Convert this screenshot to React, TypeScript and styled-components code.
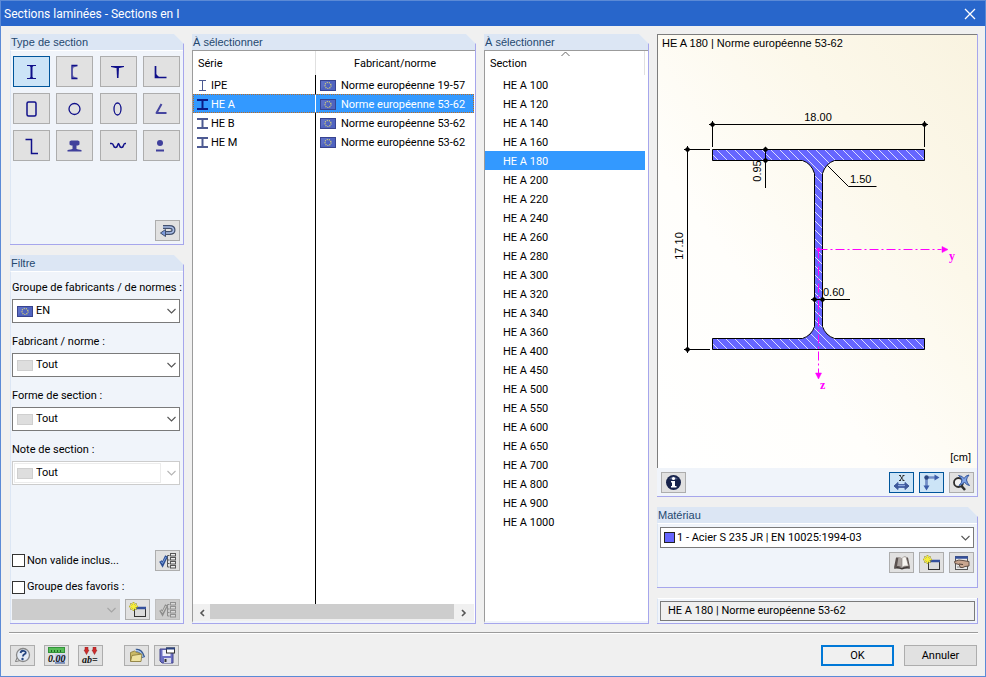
import React, { useState } from 'react';
import styled, { createGlobalStyle, css } from 'styled-components';

const NAVY = '#10108a';
const UI_FONT = 'Roboto, "Liberation Sans", sans-serif';
const CAPTION_FONT = '"Liberation Sans", Arial, sans-serif';

const GlobalStyle = createGlobalStyle`
  *, *::before, *::after { box-sizing: border-box; }
  body { margin: 0; background: #f0f0f0; }
  button, select, input, table { font: inherit; color: inherit; }
  button { padding: 0; }
`;

/* ---------- window frame ---------- */

const Dialog = styled.div`
  display: flex;
  flex-direction: column;
  min-height: 100vh;
  border: 1px solid #5b8ad6;
  background: #f0f0f0;
  color: #000;
  font: 11px/16px ${UI_FONT};
`;

const TitleBar = styled.header`
  display: flex;
  align-items: center;
  justify-content: space-between;
  height: 25px;
  padding: 0 7px 0 3px;
  background: #2866cb;
  color: #fff;
`;

const Title = styled.h1`
  margin: 0;
  font: 400 12px/16px ${UI_FONT};
`;

const CloseButton = styled.button`
  display: grid;
  place-items: center;
  width: 16px;
  height: 16px;
  border: 0;
  background: none;
`;

const Columns = styled.main`
  flex: 1;
  display: grid;
  grid-template-columns: 174px minmax(0, 284fr) minmax(0, 165fr) minmax(0, 321fr);
  gap: 8px;
  padding: 8px 7px 8px 9px;
`;

const Column = styled.div`
  display: flex;
  flex-direction: column;
  gap: 10px;
  min-width: 0;
`;

/* ---------- panels ---------- */

const Panel = styled.section<{ $grow?: boolean; $minHeight?: number; $corner?: boolean }>`
  display: flex;
  flex-direction: column;
  flex: ${p => (p.$grow ? '1 1 auto' : '0 0 auto')};
  min-height: ${p => (p.$minHeight ? `${p.$minHeight}px` : '0')};
  border: solid #a6a6ec;
  border-width: 0 1px 1px 0;
  background: #f0f4fa;
  ${p => p.$corner && css`
    clip-path: polygon(0 0, calc(100% - 10px) 0, 100% 10px, 100% 100%, 0 100%);
  `}
`;

const PanelTitle = styled.h2`
  margin: 0;
  height: 16px;
  padding-left: 1px;
  background: #dce6f4;
  color: #24486f;
  font: 400 11px/16px ${CAPTION_FONT};
`;

const PanelBody = styled.div<{ $pad: string }>`
  flex: 1;
  display: flex;
  flex-direction: column;
  border-top: 1px solid #fff;
  border-left: 1px solid #dce6f4;
  padding: ${p => p.$pad};
`;

const ListBody = styled.div<{ $right: number }>`
  flex: 1;
  display: flex;
  flex-direction: column;
  border-top: 1px solid #9b9b9b;
  border-left: 1px solid #9b9b9b;
  border-bottom: 2px solid #f0f4fa;
  padding-right: ${p => p.$right}px;
  background: #fff;
`;

/* ---------- buttons ---------- */

const ToolButton = styled.button<{ $on?: boolean; $large?: boolean }>`
  display: grid;
  place-items: center;
  width: ${p => (p.$large ? 37 : 25)}px;
  height: ${p => (p.$large ? 31 : 21)}px;
  border: 1px solid ${p => (p.$on ? '#00559b' : '#adadad')};
  background: ${p => (p.$on ? '#cce4f7' : '#e1e1e1')};
  &:disabled { background: #ccc; border-color: #bfbfbf; }
`;

const ShapeGrid = styled.div`
  display: grid;
  grid-template-columns: repeat(4, 37px);
  justify-content: space-between;
  row-gap: 6px;
`;

const ButtonRow = styled.div<{ $between?: boolean }>`
  display: flex;
  align-items: center;
  justify-content: ${p => (p.$between ? 'space-between' : 'flex-end')};
  gap: 5px;
`;

const Push = styled.div`
  flex: 1;
`;

const DialogButton = styled.button<{ $primary?: boolean }>`
  width: 73px;
  height: 21px;
  border: ${p => (p.$primary ? '2px solid #0078d7' : '1px solid #adadad')};
  background: ${p => (p.$primary ? '#f0f0f0' : '#e1e1e1')};
  font-size: 11px;
`;

/* ---------- fields ---------- */

const Field = styled.label`
  display: flex;
  flex-direction: column;
  gap: 3px;
  margin-bottom: 11px;
  white-space: nowrap;
`;

const ComboBox = styled.span<{ $height: number; $grow?: boolean }>`
  display: grid;
  align-items: center;
  height: ${p => p.$height}px;
  ${p => p.$grow && 'flex: 1;'}
  > * { grid-area: 1 / 1; }
`;

const Select = styled.select<{ $indent: number; $blank?: boolean }>`
  appearance: none;
  width: 100%;
  height: 100%;
  padding: 0 20px 0 ${p => p.$indent}px;
  border: 1px solid #7a7a7a;
  border-radius: 0;
  background: #fff;
  &:disabled {
    opacity: 1;
    color: #000;
    border-color: #ccc;
    background: ${p => (p.$blank ? '#ccc' : '#fff')};
  }
`;

const InnerFrame = styled.span`
  height: 20px;
  margin: 0 19px 0 2px;
  border: 1px solid #ececec;
  pointer-events: none;
`;

const LeadSlot = styled.span<{ $left?: number }>`
  display: flex;
  justify-self: start;
  margin-left: ${p => p.$left ?? 5}px;
  pointer-events: none;
`;

const ChevronSlot = styled.span`
  display: flex;
  justify-self: end;
  margin-right: 4px;
  pointer-events: none;
`;

const Swatch = styled.span<{ $material?: boolean }>`
  width: ${p => (p.$material ? 11 : 16)}px;
  height: 11px;
  border: 1px solid ${p => (p.$material ? '#222' : '#cfcfcf')};
  background: ${p => (p.$material ? '#6666ff' : '#dedede')};
`;

const CheckLabel = styled.label`
  display: flex;
  align-items: center;
  gap: 2px;
`;

const CheckInput = styled.input`
  appearance: none;
  width: 13px;
  height: 13px;
  margin: 0;
  border: 1px solid #333;
  background: #fff;
  &:checked { background: #333; box-shadow: inset 0 0 0 2px #fff; }
`;

const FavoriteRow = styled.div`
  display: flex;
  height: 28px;
  padding-top: 4px;
`;

const MaterialTools = styled.div`
  padding-top: 4px;
`;

/* ---------- tables ---------- */

const Table = styled.table`
  width: 100%;
  border-collapse: separate;
  border-spacing: 0;
  table-layout: fixed;
`;

const HeadCell = styled.th<{ $align?: string; $width?: string; $rule?: boolean }>`
  height: 24px;
  width: ${p => p.$width ?? 'auto'};
  padding: 2px 5px 0;
  border-right: ${p => (p.$rule ? '1px solid #e0e0e0' : '0')};
  text-align: ${p => p.$align ?? 'left'};
  font-weight: 400;
`;

const Row = styled.tr<{ $selected?: boolean; $dotted?: boolean }>`
  height: 19px;
  cursor: default;
  ${p => p.$selected && css`
    background: #3399ff;
    color: #fff;
  `}
  ${p => p.$selected && p.$dotted && css`
    outline: 1px dotted #c06a1c;
    outline-offset: -1px;
  `}
`;

const Cell = styled.td<{ $pad: number; $line?: string }>`
  padding: 2px 0 0 ${p => p.$pad}px;
  border-right: ${p => (p.$line ? `1px solid ${p.$line}` : '0')};
  white-space: nowrap;
`;

const CellContent = styled.span<{ $gap: number }>`
  display: flex;
  align-items: center;
  gap: ${p => p.$gap}px;
  height: 17px;
`;

const ColumnRule = styled.div`
  flex: 1;
  width: 123px;
  border-right: 1px solid #000;
`;

const SortMark = styled.div`
  display: flex;
  justify-content: center;
  height: 0;
`;

const ScrollBar = styled.div`
  display: flex;
  height: 17px;
  background: #f0f0f0;
`;

const ScrollArrow = styled.button<{ $wide?: boolean }>`
  display: grid;
  place-items: center;
  width: ${p => (p.$wide ? 20 : 17)}px;
  border: 0;
  background: #f0f0f0;
`;

const ScrollThumb = styled.div`
  flex: 1;
  margin-bottom: 2px;
  background: #cdcdcd;
`;

/* ---------- preview ---------- */

const Canvas = styled.figure`
  flex: 1;
  display: flex;
  flex-direction: column;
  margin: 0;
  padding: 0 4px 3px;
  border: solid #7d7d7d;
  border-width: 1px 0 0 1px;
  background: linear-gradient(to top right, #fff 0%, #fffefb 35%, #fcf8ea 70%, #f9f3e0 100%);
  font: 11px/16px ${CAPTION_FONT};
`;

const Drawing = styled.svg`
  margin: auto;
  flex: none;
  overflow: visible;
`;

const Unit = styled.figcaption`
  align-self: flex-end;
  padding-right: 2px;
`;

const PreviewTools = styled.div`
  padding: 4px 3px 3px 4px;
`;

const StatusBox = styled.output`
  display: block;
  height: 20px;
  padding-left: 7px;
  border: 1px solid #7a7a7a;
  background: #f0f0f0;
  line-height: 18px;
`;

/* ---------- footer ---------- */

const Footer = styled.footer`
  display: flex;
  align-items: center;
  gap: 10px;
  margin: 0 7px 0 8px;
  padding: 12px 1px 10px;
  border-top: 1px solid #9b9b9b;
  box-shadow: inset 0 1px 0 #fff;
`;

const ToolGroup = styled.div<{ $gap: number; $after: number }>`
  display: flex;
  gap: ${p => p.$gap}px;
  margin-right: ${p => p.$after}px;
`;

/* ---------- icons ---------- */

const Icon = ({ w = 20, h = 20, children }: { w?: number; h?: number; children: React.ReactNode }) => (
  <svg width={w} height={h} viewBox={`0 0 ${w} ${h}`} fill="none" aria-hidden="true">{children}</svg>
);

const Chevron = ({ color = '#555' }: { color?: string }) => (
  <Icon w={9} h={6}><path d="M.5 1l4 4 4-4" stroke={color} strokeWidth="1.1" /></Icon>
);

const Flag = () => (
  <Icon w={16} h={11}>
    <rect width="16" height="11" fill="#38448f" />
    <rect x="1" y="1" width="14" height="9" fill="#4f63c0" />
    <path d="M1 1h8L1 9z" fill="#6a7ccc" opacity=".5" />
    <circle cx="8" cy="5.5" r="3" stroke="#e6de6c" strokeWidth="1.2" strokeDasharray="1 1.09" />
  </Icon>
);

const Beam = ({ wide, dark }: { wide?: boolean; dark?: boolean }) => (
  <Icon w={11} h={11}>
    <path
      d={wide ? 'M0 1h11M0 10h11M5.5 1v9' : 'M2 .5h7M2 10.5h7M5.5 .5v10'}
      stroke={dark ? '#0a1a86' : '#4d5a92'}
      strokeWidth={wide ? 2 : 1}
    />
  </Icon>
);

const shapes: { name: string; art: React.ReactNode }[] = [
  { name: 'Sections en I', art: <><path d="M5 3.5h9M5 16.5h9" stroke={NAVY} /><path d="M9.5 4v12" stroke={NAVY} strokeWidth="2" /><path d="M7.5 4h4l-2 1.5zM7.5 16h4l-2-1.5z" fill={NAVY} /></> },
  { name: 'Sections en U', art: <><path d="M12.5 3.5H7v13h5.5" stroke={NAVY} strokeWidth="1.3" /><path d="M7.5 4h5l-4 1.5L8 7zM7.5 16h5l-4-1.5L8 13z" fill={NAVY} opacity=".6" /></> },
  { name: 'Sections en T', art: <><path d="M3 4h13v1l-4.5 1h-4L3 5z" fill={NAVY} /><path d="M8.5 5h2.5l-.5 11h-1.500z" fill={NAVY} /></> },
  { name: 'Cornières', art: <><path d="M4.5 4v11.5h11" stroke={NAVY} strokeWidth="1.7" /><path d="M5 12l3 3H5z" fill={NAVY} /></> },
  { name: 'Sections creuses rectangulaires', art: <rect x="5" y="3" width="9" height="14" rx="1.5" stroke={NAVY} strokeWidth="1.5" /> },
  { name: 'Sections creuses circulaires', art: <circle cx="9.5" cy="10" r="5.5" stroke={NAVY} strokeWidth="1.3" /> },
  { name: 'Sections elliptiques', art: <ellipse cx="9.5" cy="10" rx="3.5" ry="6" stroke={NAVY} strokeWidth="1.3" /> },
  { name: 'Cornières ouvertes', art: <path d="M10.5 5L5.5 14h10" stroke="#4646a0" strokeWidth="2" strokeLinejoin="round" /> },
  { name: 'Sections en Z', art: <path d="M3.5 3.5h6v14h6.5" stroke={NAVY} strokeWidth="1.5" /> },
  { name: 'Rails', art: <path d="M4.5 5.5L6 4.5h7l1.5 1v3L13 9.5h-1.500V13l2 .5 3 .5v1.500h-14V14l3-.5 2-.5V9.500H6L4.500 8.500z" fill="#40409c" /> },
  { name: 'Tôles ondulées', art: <path d="M2 7.500h1.500q1.500 0 2 2t2 2 2-2 1-2 1 2 2 2 2-2 1.500-2H18" stroke={NAVY} strokeWidth="1.5" /> },
  { name: 'Barres pleines', art: <><circle cx="9" cy="7" r="3" fill="#40409c" /><path d="M5 14.5h8" stroke="#40409c" strokeWidth="2.2" /></> },
];

const BackIcon = () => (
  <Icon w={16} h={14}>
    <path d="M3 3h6.500q4 0 4 3t-4 3H5" stroke="#42506e" strokeWidth="4" />
    <path d="M3 3h6.500q4 0 4 3t-4 3H4" stroke="#a9bde6" strokeWidth="1.6" />
    <path d="M5.500 5.500v7L.5 9z" fill="#7d9bdc" stroke="#42506e" />
  </Icon>
);

const TreeCheckIcon = ({ muted }: { muted?: boolean }) => (
  <Icon w={18} h={16}>
    <path d="M8.500 8V2.500h2M8.500 7h2M8.500 10.500h2M8.500 7v7h2" stroke={muted ? '#8d8d8d' : '#555'} />
    {[0, 4, 8, 12].map(y => (
      <rect key={y} x="11.5" y={y + .5} width="5" height="2.5" fill={muted ? '#d8d8d8' : '#eee'} stroke={muted ? '#909090' : '#555'} />
    ))}
    <path d="M1.500 8l2 3.500L7.500 3" stroke={muted ? '#8d8d8d' : '#2e4f93'} strokeWidth="3" />
    <path d="M2 8.500l1.500 2L7 4" stroke={muted ? '#d3d3cf' : '#7fa4e2'} />
  </Icon>
);

const NewIcon = () => (
  <Icon w={18} h={16}>
    <rect x="5.5" y="5.5" width="11" height="9" fill="#dcdcdc" stroke="#333" />
    <path d="M5 6h12" stroke="#34509c" strokeWidth="2.5" />
    <path d="M4.500 0v9M0 4.500h9M1.500 1.500l6 6M7.500 1.500l-6 6" stroke="#8b8420" strokeWidth="1.6" />
    <path d="M4.500 .5v8M.5 4.500h8M2 2l5 5M7 2L2 7" stroke="#f6ee3a" strokeWidth="1.3" />
  </Icon>
);

const HelpIcon = () => (
  <Icon w={18} h={17}>
    <path d="M3 11L1.500 14.500l5-1z" fill="#fff" stroke="#777" />
    <circle cx="9" cy="8" r="6.5" fill="#e4ebf5" stroke="#888" strokeWidth="1.3" />
    <path d="M6.500 6q.5-2.500 3-2.200 3 .4 2 2.700-2.500 1-2.500 3" stroke="#25457f" strokeWidth="1.8" />
    <circle cx="8.5" cy="12" r="1.2" fill="#25457f" />
  </Icon>
);

const iconText = { fontFamily: '"Liberation Serif", serif', fontStyle: 'italic', fontWeight: 700 } as const;

const UnitsIcon = () => (
  <Icon w={19} h={17}>
    <rect x="1.5" y=".5" width="16" height="5" fill="#58bd58" stroke="#32933a" />
    <path d="M4.500 3v2M7.500 3v2M10.500 3v2M13.500 3v2" stroke="#1d6a25" />
    <rect x="8" y="7" width="10" height="9" fill="#bdcdf0" />
    <text x="1" y="15" fontSize="10" fill="#101010" {...iconText}>0.00</text>
    <path d="M8 16h10" stroke="#33508f" />
  </Icon>
);

const AbIcon = () => (
  <Icon w={19} h={17}>
    <path d="M4 0h3v3h1L5.500 7.500 3 3h1zM12 0h3v3h1l-2.500 4.500L11 3h1z" fill="#cf2a2a" stroke="#8e2626" strokeWidth=".5" />
    <text x="1" y="15.5" fontSize="10" fill="#101010" {...iconText}>ab=</text>
  </Icon>
);

const FolderIcon = () => (
  <Icon w={18} h={16}>
    <path d="M8 2.500q5-1 7.500 7" stroke="#35578f" strokeWidth="3.5" />
    <path d="M8 2.500q5 0 7 6.500" stroke="#a9c7f0" strokeWidth="1.3" />
    <path d="M2.500 13V4.500L6.500 3l2 1.500 4 1V13z" fill="#cbbb66" stroke="#857635" strokeWidth=".8" />
    <path d="M2.500 13.500l1.500-6L14 6l-1 7.500z" fill="#efe3a0" stroke="#857635" strokeWidth=".8" />
  </Icon>
);

const SaveIcon = () => (
  <Icon w={18} h={17}>
    <path d="M2 2h13v14H4l-2-2z" fill="#6c70c4" stroke="#44478c" />
    <rect x="4.5" y="3" width="8" height="6" fill="#eef0fa" />
    <rect x="6" y="11" width="7" height="5" fill="#d6d8ea" /><path d="M7.500 12v3" stroke="#333" strokeWidth="2" />
    <rect x="8.5" y="1" width="8" height="5" fill="#fff" stroke="#333" /><path d="M8 1.500h9" stroke="#2b4380" strokeWidth="2" />
  </Icon>
);

const InfoIcon = () => (
  <Icon w={17} h={17}>
    <circle cx="8.5" cy="8.5" r="7.5" fill="#16224a" /><path d="M4 5q4-5 9 0-4 1-9 0z" fill="#66759f" opacity=".7" />
    <circle cx="8.5" cy="4.500" r="1.6" fill="#fff" /><path d="M6 7h4v5h1.500v1.500H6V12h1V8.500H6z" fill="#fff" />
  </Icon>
);

const DimensionIcon = () => (
  <Icon w={19} h={17}>
    <path d="M7 1.500h2M10.500 1.500h2M7 6.500h2M10.500 6.500h2M8 1.500l3.500 5M11.500 1.500L8 6.500" stroke="#222" strokeWidth=".9" />
    <path d="M4 12h11" stroke="#4c68ac" strokeWidth="4" />
    <path d="M2 12l4-3.500v7zM17 12l-4-3.500v7z" fill="#3f5a9c" stroke="#3f5a9c" />
    <path d="M6 11.500h7" stroke="#8ba6dc" />
  </Icon>
);

const AxesIcon = () => (
  <Icon w={19} h={17}>
    <path d="M4.500 3.500h10M4.500 3.500v10" stroke="#4a67ac" strokeWidth="2.2" />
    <path d="M5 3.500h9M4.500 4v9" stroke="#8ba6dc" strokeWidth=".6" />
    <circle cx="4.5" cy="3.5" r="2.2" fill="#2c4781" />
    <path d="M12.500 .5l5 3-5 3zM1.500 11.500l3 5 3-5z" fill="#3b5ca9" />
  </Icon>
);

const ZoomIcon = () => (
  <Icon w={19} h={17}>
    <circle cx="6.5" cy="8.5" r="4.5" fill="#f3f3f3" stroke="#2e2e2e" strokeWidth="1.8" />
    <path d="M9.500 12l3.500 4" stroke="#2e2e2e" strokeWidth="2.5" />
    <path d="M6.500 1.500q4.500.5 5.500 3 1.500-3 5-3.500-2.500 3-2.500 5 .5 3 3 5.500-3.500-.5-5-3.500-1.500 2.500-5.500 3.500 3-2.500 3-5.500-1-3-3.500-4.500z" fill="#7fa3e6" stroke="#34579e" />
  </Icon>
);

const BookIcon = () => (
  <Icon w={18} h={16}>
    <path d="M1 12.500L3 2.500h3l3 10zM17 12.500l-2-10h-3L9 13z" fill="#5b5250" />
    <path d="M1 12.500q4-1 8 .5 4-1.500 8-.5l-.3 1.200Q13 13 9 14.500 5 13 1.300 13.700z" fill="#3e3836" />
    <path d="M5.500 2Q8 1.500 9 3.500v9Q7 10.500 4 11z" fill="#a9a29e" />
    <path d="M9 3.500Q10.500 .8 13 1.800l2.500 9.200Q11 10.500 9 12.500z" fill="#f7f5f1" stroke="#847d78" strokeWidth=".6" />
  </Icon>
);

const HandIcon = () => (
  <Icon w={18} h={16}>
    <rect x="2.5" y="1.5" width="12" height="13" fill="#e9e9e9" stroke="#555" /><path d="M2 2.500h13" stroke="#34509c" strokeWidth="2.5" />
    <path d="M4 12h6" stroke="#888" />
    <path d="M1.500 6.500Q6 4 10 5.500l6 1V11l-4 .5q-2 1.500-4.500 1L6 9.500l-4-1z" fill="#c9a68f" stroke="#54433a" strokeWidth=".9" />
    <path d="M6 9l4 .5" stroke="#54433a" />
  </Icon>
);

/* ---------- section drawing ---------- */

const Node = ({ x, y }: { x: number; y: number }) => (
  <path d={`M${x - 3} ${y}l3-3 3 3-3 3z`} fill="#000" />
);

const SectionDrawing = () => (
  <Drawing width="310" height="300" viewBox="663 100 310 300" role="img" aria-label="HE A 180">
    <defs>
      <pattern id="hatch" width="9" height="9" patternUnits="userSpaceOnUse">
        <rect width="9" height="9" fill="#6666ff" />
        <path d="M-1-1l11 11M-1 8l2 2M8-1l2 2" stroke="#dcdcff" strokeWidth="1" />
      </pattern>
    </defs>
    <path
      d="M712.5 149.5h212v11h-90q-9 3-12 13v153q3 9 12 12h90v11h-212v-11h90q9-3 12-12v-153q-3-10-12-13h-90z"
      fill="url(#hatch)"
      stroke="#000"
    />
    <g stroke="#000" fill="none">
      <path d="M709 124.5h219M712.5 121v26M924.5 121v26" />
      <path d="M687.5 146v207M684 149.5h26M684 349.5h26" />
      <path d="M765.5 147v41" />
      <path d="M827.5 165.5l21 21h28" />
      <path d="M811 299.5h39" />
    </g>
    <Node x={712.5} y={124.5} /><Node x={924.5} y={124.5} />
    <Node x={687.5} y={149.5} /><Node x={687.5} y={349.5} />
    <Node x={765.5} y={149.5} /><Node x={765.5} y={160.5} />
    <Node x={814.5} y={299.5} /><Node x={822.5} y={299.5} />
    <g fontFamily={CAPTION_FONT} fontSize="11" fill="#000">
      <text x="818" y="121" textAnchor="middle">18.00</text>
      <text x="850" y="183">1.50</text>
      <text x="823" y="296">0.60</text>
      <text transform="translate(683 246) rotate(-90)" textAnchor="middle">17.10</text>
      <text transform="translate(761 171) rotate(-90)" textAnchor="middle">0.95</text>
    </g>
    <g stroke="#ff00ff" fill="#ff00ff">
      <path d="M818.5 249.5h123M818.5 249.5v124" fill="none" strokeDasharray="9 3 2 3" />
      <path d="M942 246.5l6 3-6 3zM815.5 373l3 6 3-6z" strokeWidth=".5" />
      <circle cx="818.5" cy="249.5" r="1.5" />
    </g>
    <g fontFamily='"Liberation Serif", serif' fontSize="12" fontWeight="700" fill="#ff00ff">
      <text x="949" y="260">y</text>
      <text x="820" y="389">z</text>
    </g>
  </Drawing>
);

/* ---------- data ---------- */

const series = [
  { name: 'IPE', norm: 'Norme européenne 19-57', wide: false },
  { name: 'HE A', norm: 'Norme européenne 53-62', wide: true },
  { name: 'HE B', norm: 'Norme européenne 53-62', wide: true },
  { name: 'HE M', norm: 'Norme européenne 53-62', wide: true },
];

const sizes = [100, 120, 140, 160, 180, 200, 220, 240, 260, 280, 300, 320, 340, 360, 400, 450, 500, 550, 600, 650, 700, 800, 900, 1000];

const filters = [
  { label: 'Groupe de fabricants / de normes :', value: 'EN', flag: true },
  { label: 'Fabricant / norme :', value: 'Tout' },
  { label: 'Forme de section :', value: 'Tout' },
  { label: 'Note de section :', value: 'Tout', disabled: true },
];

export default function App() {
  const [shape, setShape] = useState(0);
  const [serie, setSerie] = useState(1);
  const [size, setSize] = useState(180);

  return (
    <>
      <GlobalStyle />
      <Dialog role="dialog" aria-labelledby="dialog-title">
        <TitleBar>
          <Title id="dialog-title">Sections laminées - Sections en I</Title>
          <CloseButton aria-label="Fermer">
            <Icon w={12} h={12}><path d="M1 1l10 10M11 1L1 11" stroke="#fff" strokeWidth="1.3" /></Icon>
          </CloseButton>
        </TitleBar>

        <Columns>
          <Column>
            <Panel $minHeight={211} $corner>
              <PanelTitle>Type de section</PanelTitle>
              <PanelBody $pad="5px 3px 3px 2px">
                <ShapeGrid>
                  {shapes.map((s, i) => (
                    <ToolButton key={s.name} $large $on={i === shape} aria-label={s.name} aria-pressed={i === shape} onClick={() => setShape(i)}>
                      <Icon>{s.art}</Icon>
                    </ToolButton>
                  ))}
                </ShapeGrid>
                <Push />
                <ButtonRow><ToolButton aria-label="Retour"><BackIcon /></ToolButton></ButtonRow>
              </PanelBody>
            </Panel>

            <Panel $grow $corner>
              <PanelTitle>Filtre</PanelTitle>
              <PanelBody $pad="8px 3px 3px 1px">
                {filters.map(f => (
                  <Field key={f.label}>
                    {f.label}
                    <ComboBox $height={24}>
                      <Select $indent={23} disabled={f.disabled}><option>{f.value}</option></Select>
                      {f.disabled && <InnerFrame />}
                      <LeadSlot>{f.flag ? <Flag /> : <Swatch />}</LeadSlot>
                      <ChevronSlot><Chevron color={f.disabled ? '#b5b5b5' : '#555'} /></ChevronSlot>
                    </ComboBox>
                  </Field>
                ))}
                <Push />
                <ButtonRow $between>
                  <CheckLabel><CheckInput type="checkbox" />Non valide inclus...</CheckLabel>
                  <ToolButton aria-label="Options"><TreeCheckIcon /></ToolButton>
                </ButtonRow>
                <FavoriteRow>
                  <CheckLabel><CheckInput type="checkbox" />Groupe des favoris :</CheckLabel>
                </FavoriteRow>
                <ButtonRow>
                  <ComboBox $height={21} $grow>
                    <Select $indent={4} $blank disabled aria-label="Groupe des favoris"><option /></Select>
                    <ChevronSlot><Chevron color="#a5a5a5" /></ChevronSlot>
                  </ComboBox>
                  <ToolButton aria-label="Nouveau groupe"><NewIcon /></ToolButton>
                  <ToolButton aria-label="Gérer les favoris" disabled><TreeCheckIcon muted /></ToolButton>
                </ButtonRow>
              </PanelBody>
            </Panel>
          </Column>

          <Panel $corner>
            <PanelTitle>À sélectionner</PanelTitle>
            <ListBody $right={1}>
              <Table>
                <thead>
                  <tr>
                    <HeadCell $width="123px" $rule>Série</HeadCell>
                    <HeadCell $align="center">Fabricant/norme</HeadCell>
                  </tr>
                </thead>
                <tbody>
                  {series.map((s, i) => (
                    <Row key={s.name} $selected={i === serie} $dotted onClick={() => setSerie(i)} aria-selected={i === serie}>
                      <Cell $pad={4} $line={i === serie ? '#fff' : '#000'}>
                        <CellContent $gap={3}><Beam wide={s.wide} dark={i === serie} />{s.name}</CellContent>
                      </Cell>
                      <Cell $pad={4}>
                        <CellContent $gap={5}><Flag />{s.norm}</CellContent>
                      </Cell>
                    </Row>
                  ))}
                </tbody>
              </Table>
              <ColumnRule />
              <ScrollBar>
                <ScrollArrow aria-label="Défiler à gauche"><Icon w={6} h={8}><path d="M5 1L2 4l3 3" stroke="#555" strokeWidth="1.6" /></Icon></ScrollArrow>
                <ScrollThumb />
                <ScrollArrow $wide aria-label="Défiler à droite"><Icon w={6} h={8}><path d="M1 1l3 3-3 3" stroke="#555" strokeWidth="1.6" /></Icon></ScrollArrow>
              </ScrollBar>
            </ListBody>
          </Panel>

          <Panel $corner>
            <PanelTitle>À sélectionner</PanelTitle>
            <ListBody $right={3}>
              <SortMark><Icon w={9} h={6}><path d="M.5 5l4-4 4 4" stroke="#666" /></Icon></SortMark>
              <Table>
                <thead>
                  <tr><HeadCell $rule>Section</HeadCell></tr>
                </thead>
                <tbody>
                  {sizes.map(n => (
                    <Row key={n} $selected={n === size} onClick={() => setSize(n)} aria-selected={n === size}>
                      <Cell $pad={18}>HE A {n}</Cell>
                    </Row>
                  ))}
                </tbody>
              </Table>
            </ListBody>
          </Panel>

          <Column>
            <Panel $grow>
              <Canvas>
                <span>HE A 180 | Norme européenne 53-62</span>
                <SectionDrawing />
                <Unit>[cm]</Unit>
              </Canvas>
              <PreviewTools>
                <ButtonRow>
                  <ToolButton aria-label="Informations"><InfoIcon /></ToolButton>
                  <Push />
                  <ToolButton $on aria-label="Afficher les cotes"><DimensionIcon /></ToolButton>
                  <ToolButton $on aria-label="Afficher les axes"><AxesIcon /></ToolButton>
                  <ToolButton aria-label="Réinitialiser le zoom"><ZoomIcon /></ToolButton>
                </ButtonRow>
              </PreviewTools>
            </Panel>

            <Panel $corner $minHeight={81}>
              <PanelTitle>Matériau</PanelTitle>
              <PanelBody $pad="3px 3px 3px 2px">
                <ComboBox $height={21}>
                  <Select $indent={16} aria-label="Matériau"><option>1 - Acier S 235 JR | EN 10025:1994-03</option></Select>
                  <LeadSlot $left={4}><Swatch $material /></LeadSlot>
                  <ChevronSlot><Chevron /></ChevronSlot>
                </ComboBox>
                <MaterialTools>
                  <ButtonRow>
                    <ToolButton aria-label="Bibliothèque de matériaux"><BookIcon /></ToolButton>
                    <ToolButton aria-label="Nouveau matériau"><NewIcon /></ToolButton>
                    <ToolButton aria-label="Modifier le matériau"><HandIcon /></ToolButton>
                  </ButtonRow>
                </MaterialTools>
              </PanelBody>
            </Panel>

            <Panel>
              <PanelBody $pad="2px">
                <StatusBox>HE A 180 | Norme européenne 53-62</StatusBox>
              </PanelBody>
            </Panel>
          </Column>
        </Columns>

        <Footer>
          <ToolGroup $gap={9} $after={11}>
            <ToolButton aria-label="Aide"><HelpIcon /></ToolButton>
            <ToolButton aria-label="Unités et décimales"><UnitsIcon /></ToolButton>
            <ToolButton aria-label="Paramètres"><AbIcon /></ToolButton>
          </ToolGroup>
          <ToolGroup $gap={5} $after={0}>
            <ToolButton aria-label="Ouvrir"><FolderIcon /></ToolButton>
            <ToolButton aria-label="Enregistrer"><SaveIcon /></ToolButton>
          </ToolGroup>
          <Push />
          <DialogButton $primary>OK</DialogButton>
          <DialogButton>Annuler</DialogButton>
        </Footer>
      </Dialog>
    </>
  );
}
